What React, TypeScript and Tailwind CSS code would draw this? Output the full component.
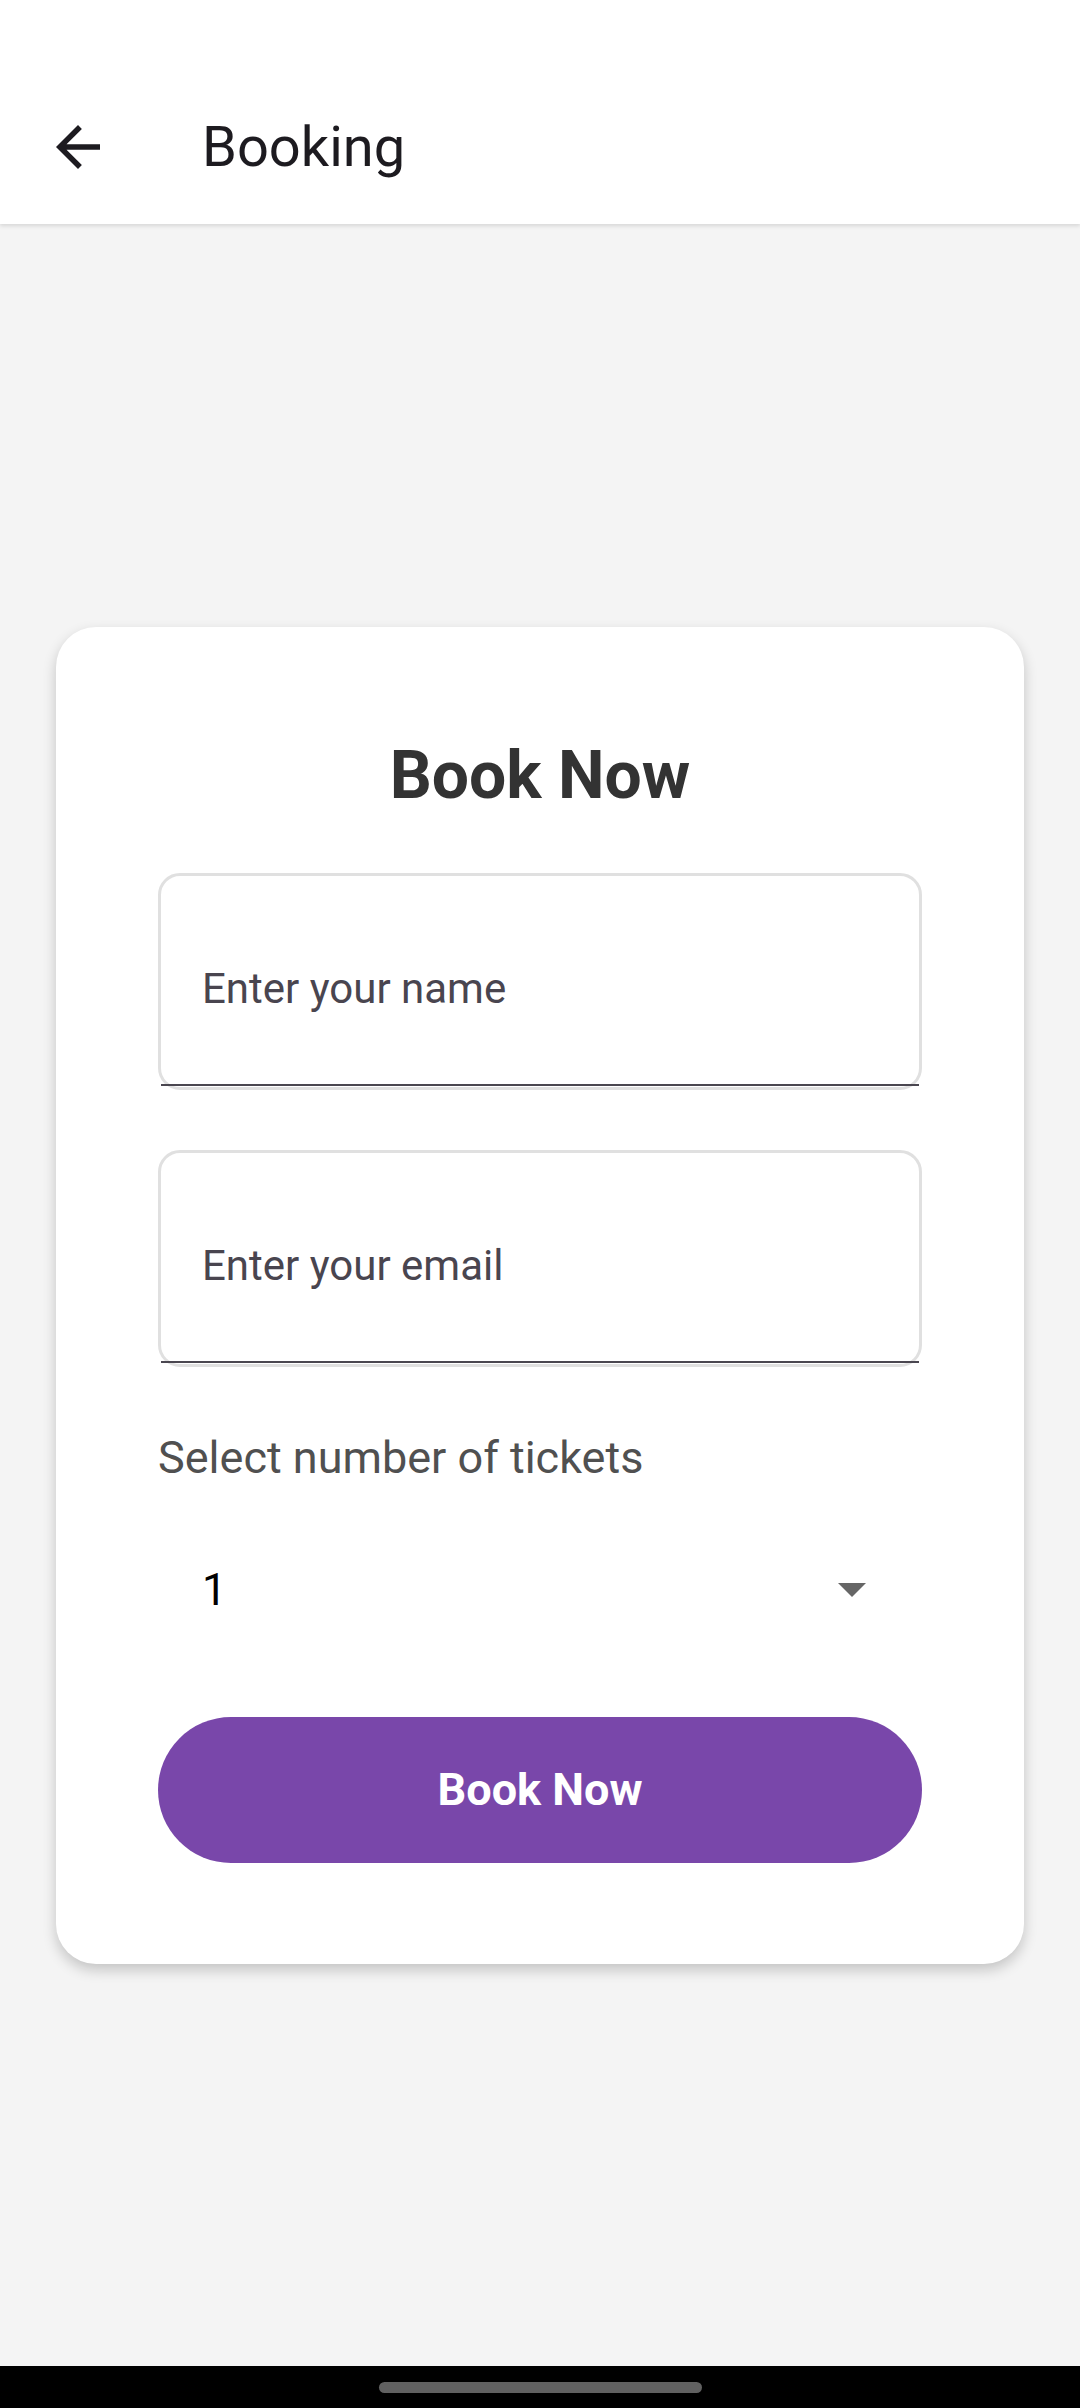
import React from 'react';

const BackArrow: React.FC = () => (
  <svg viewBox="0 0 24 24" className="w-[66px] h-[66px]" fill="#1d1b20">
    <path d="M20 11H7.83l5.59-5.59L12 4l-8 8 8 8 1.41-1.41L7.83 13H20v-2z" />
  </svg>
);

const TextField: React.FC<{ placeholder: string; type?: string }> = ({ placeholder, type = 'text' }) => (
  <div className="relative h-[217px] rounded-[22px] border-[3px] border-[#e0e0e0] bg-white pt-[87px] pl-[41px] pr-[40px]">
    <input
      type={type}
      placeholder={placeholder}
      className="w-full h-[52px] leading-[52px] text-[42px] text-[#1d1b20] placeholder:text-[#49454f] bg-transparent outline-none"
    />
    {/* underline */}
    <div className="absolute left-0 right-0 bottom-[1px] h-[2px] bg-[#4a4750]" />
  </div>
);

export default function App() {
  return (
    <div className="w-[1080px] h-[2408px] bg-[#f4f4f4] flex flex-col font-['Roboto',sans-serif]">
      {/* App bar */}
      <header className="h-[224px] bg-white shadow-[0_2px_4px_rgba(0,0,0,0.12)] pt-[70px] relative z-10">
        <div className="h-[154px] flex items-center pl-[45px]">
          <button aria-label="Back" className="flex items-center">
            <BackArrow />
          </button>
          <h1 className="ml-[91px] text-[56px] leading-[64px] text-[#1d1b20]">Booking</h1>
        </div>
      </header>

      {/* Content */}
      <main className="flex-1 flex items-center justify-center px-[56px]">
        <div className="w-full bg-white rounded-[40px] shadow-[0_6px_14px_rgba(0,0,0,0.2)] pt-[110px] pb-[101px] px-[102px] flex flex-col">
          <h2 className="text-center text-[66px] leading-[77px] font-bold text-[#333333]">Book Now</h2>

          <div className="mt-[59px]">
            <TextField placeholder="Enter your name" />
          </div>
          <div className="mt-[60px]">
            <TextField placeholder="Enter your email" type="email" />
          </div>

          <p className="mt-[65px] text-[45px] leading-[52px] text-[#505050]">Select number of tickets</p>

          <div className="mt-[40px] h-[132px] flex items-center justify-between pl-[44px] pr-[56px]">
            <span className="text-[44px] leading-[52px] text-black">1</span>
            <svg width="28" height="14" viewBox="0 0 28 14">
              <polygon points="0,0 28,0 14,14" fill="#666666" />
            </svg>
          </div>

          <button className="mt-[61px] h-[146px] w-full rounded-full bg-[#7947aa] text-white text-[45px] font-bold">
            Book Now
          </button>
        </div>
      </main>

      {/* Gesture nav bar */}
      <div className="h-[42px] bg-black flex items-center justify-center">
        <div className="w-[323px] h-[11px] rounded-full bg-[#616161]" />
      </div>
    </div>
  );
}
